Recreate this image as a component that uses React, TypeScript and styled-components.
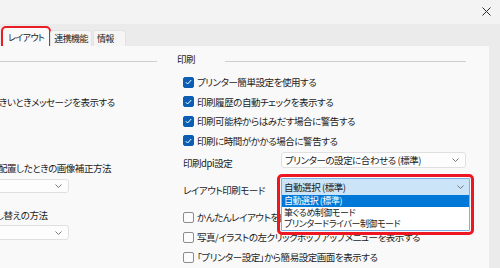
import styled, { createGlobalStyle } from "styled-components";

const GlobalStyle = createGlobalStyle`
  html, body {
    margin: 0;
    padding: 0;
    width: 500px;
    height: 268px;
    overflow: hidden;
    background: #f2f2f2;
  }
  body {
    font-family: "Noto Sans CJK JP", "Noto Sans", sans-serif;
    font-feature-settings: "palt";
    letter-spacing: -0.45px;
    color: #1b1b1b;
  }
`;

const checked = [
    "プリンター簡単設定を使用する",
    "印刷履歴の自動チェックを表示する",
    "印刷可能枠からはみだす場合に警告する",
    "印刷に時間がかかる場合に警告する",
];

const unchecked = [
    "かんたんレイアウトを自動で起動する",
    "写真/イラストの左クリックポップアップメニューを表示する",
    "「プリンター設定」から簡易設定画面を表示する",
];

const modes = ["自動選択 (標準)", "筆ぐるめ制御モード", "プリンタードライバー制御モード"];

function Chevron() {
    return (
        <svg width="7" height="4" viewBox="0 0 7 4">
            <polyline points="0.5,0.5 3.5,3.5 6.5,0.5" fill="none" stroke="#6a6a6a" strokeWidth="0.9"/>
        </svg>
    );
}

function Check() {
    return (
        <svg width="7" height="6" viewBox="0 0 7 6">
            <polyline points="0.8,3.2 2.6,5 6.2,1" fill="none" stroke="#fff" strokeWidth="1"/>
        </svg>
    );
}

export default function App() {
    return (
        <>
            <GlobalStyle/>
            <Window>
                <TitleBar>
                    <CloseButton>
                        <svg width="9" height="9" viewBox="0 0 9 9">
                            <path d="M0.5 0.5L8.5 8.5M8.5 0.5L0.5 8.5" stroke="#2a2a2a" strokeWidth="1"/>
                        </svg>
                    </CloseButton>
                </TitleBar>
                <TabStrip>
                    <Tab $active>レイアウト</Tab>
                    <Tab>連携機能</Tab>
                    <Tab $min={33}>情報</Tab>
                </TabStrip>
                <Body>
                    <Panel>
                        <LeftCol>
                            <Header><Rule/></Header>
                            <Row $mt={4.5}/>
                            <Row><ClipText>きいときメッセージを表示する</ClipText></Row>
                            <Label $mt={48.5} $shift={-2}>配置したときの画像補正方法</Label>
                            <Select $mt={3} $h={14} $left>
                                <span/>
                                <Chevron/>
                            </Select>
                            <Label $mt={14} $shift={-4}>し替えの方法</Label>
                            <Select $mt={2} $h={15} $left>
                                <span/>
                                <Chevron/>
                            </Select>
                        </LeftCol>

                        <RightCol>
                            <Header>
                                <HeaderTitle>印刷</HeaderTitle>
                                <Rule/>
                            </Header>
                            <List $mt={4.5}>
                                {checked.map((t) => (
                                    <Row key={t}>
                                        <Box $on><Check/></Box>
                                        <RowText>{t}</RowText>
                                    </Row>
                                ))}
                            </List>
                            <Field $mt={1.5} $h={16}>
                                <FieldLabel>印刷dpi設定</FieldLabel>
                                <Select $h={16}>
                                    <span>プリンターの設定に合わせる (標準)</span>
                                    <Chevron/>
                                </Select>
                            </Field>
                            <Field $mt={10} $h={17}>
                                <FieldLabel>レイアウト印刷モード</FieldLabel>
                                <SelectSlot>
                                    <OpenSelect>
                                        <OpenHead>
                                            <span>{modes[0]}</span>
                                            <Chevron/>
                                        </OpenHead>
                                        {modes.map((m, i) => (
                                            <Option key={m} $sel={i === 0}>{m}</Option>
                                        ))}
                                    </OpenSelect>
                                </SelectSlot>
                            </Field>
                            <List $mt={12}>
                                {unchecked.map((t) => (
                                    <Row key={t} $h={20}>
                                        <Box/>
                                        <RowText>{t}</RowText>
                                    </Row>
                                ))}
                            </List>
                        </RightCol>
                    </Panel>
                    <Gutter/>
                </Body>
            </Window>
        </>
    );
}

const Window = styled.div`
    width: 500px;
    height: 268px;
    display: flex;
    flex-direction: column;
    overflow: hidden;
`
const TitleBar = styled.div`
    height: 24px;
    background: #f3f3f3;
    display: flex;
    justify-content: flex-end;
    align-items: flex-start;
`
const CloseButton = styled.div`
    width: 9px;
    height: 9px;
    margin: 7px 9px 0 0;
    display: flex;
`
const TabStrip = styled.div`
    height: 22px;
    background: #ebebeb;
    display: flex;
    align-items: flex-end;
    padding-left: 3px;
    font-size: 9px;
    letter-spacing: -0.6px;
`
const Tab = styled.div<{ $active?: boolean; $min?: number }>`
    height: ${(p) => (p.$active ? 18 : 16)}px;
    min-width: ${(p) => p.$min ?? 0}px;
    padding: 0 ${(p) => (p.$active ? 4 : 3)}px;
    margin-right: 1px;
    display: flex;
    align-items: center;
    box-sizing: border-box;
    background: ${(p) => (p.$active ? "#f9f9f9" : "#f5f5f5")};
    border: 1px solid ${(p) => (p.$active ? "#f9f9f9" : "#e2e2e2")};
    border-bottom: none;
    border-radius: 3px 3px 0 0;
    outline: ${(p) => (p.$active ? "2.5px solid #ea1c24" : "none")};
    outline-offset: 0;
`
const Body = styled.div`
    flex: 1;
    display: flex;
`
const Panel = styled.div`
    width: 489px;
    background: #f9f9f9;
    display: flex;
    padding-top: 4px;
    box-sizing: border-box;
`
const Gutter = styled.div`
    flex: 1;
    background: #ebebeb;
`
const LeftCol = styled.div`
    width: 157px;
    overflow: hidden;
    display: flex;
    flex-direction: column;
`
const RightCol = styled.div`
    width: 289px;
    margin-left: 20px;
    display: flex;
    flex-direction: column;
`
const Header = styled.div`
    height: 18px;
    display: flex;
    align-items: center;
    font-size: 9.5px;
`
const HeaderTitle = styled.div`
    width: 48px;
`
const Rule = styled.div`
    flex: 1;
    height: 1px;
    margin-top: 4px;
    background: #cfcfcf;
`
const List = styled.div<{ $mt?: number }>`
    margin-top: ${(p) => p.$mt ?? 0}px;
    display: flex;
    flex-direction: column;
`
const Row = styled.div<{ $mt?: number; $h?: number }>`
    height: ${(p) => p.$h ?? 19.5}px;
    margin-top: ${(p) => p.$mt ?? 0}px;
    display: flex;
    align-items: center;
    padding-left: 6px;
    font-size: 9.5px;
    white-space: nowrap;
`
const ClipText = styled.span`
    margin-left: -7px;
`
const Box = styled.div<{ $on?: boolean }>`
    width: 11px;
    height: 11px;
    box-sizing: border-box;
    border-radius: 2px;
    flex-shrink: 0;
    display: flex;
    align-items: center;
    justify-content: center;
    background: ${(p) => (p.$on ? "#0a5fb4" : "#fbfbfb")};
    border: 1px solid ${(p) => (p.$on ? "#0a5fb4" : "#8c8c8c")};
`
const RowText = styled.span`
    margin-left: 3px;
`
const Label = styled.div<{ $mt?: number; $shift: number }>`
    height: 16px;
    margin-top: ${(p) => p.$mt ?? 0}px;
    margin-left: ${(p) => p.$shift}px;
    display: flex;
    align-items: center;
    font-size: 9.5px;
    white-space: nowrap;
`
const Field = styled.div<{ $mt?: number; $h: number }>`
    height: ${(p) => p.$h}px;
    margin-top: ${(p) => p.$mt ?? 0}px;
    display: flex;
    align-items: center;
    padding-left: 6px;
    font-size: 9.5px;
`
const FieldLabel = styled.div`
    width: 98px;
    flex-shrink: 0;
    padding-top: 6px;
    white-space: nowrap;
`
const Select = styled.div<{ $mt?: number; $h: number; $left?: boolean }>`
    height: ${(p) => p.$h}px;
    width: ${(p) => (p.$left ? 100 : 189)}px;
    margin-top: ${(p) => p.$mt ?? 0}px;
    margin-left: ${(p) => (p.$left ? -31 : 0)}px;
    box-sizing: border-box;
    background: #fdfdfd;
    border: 1px solid #e0e0e0;
    border-radius: 3px;
    display: flex;
    align-items: center;
    justify-content: space-between;
    padding: 0 6px 0 3px;
    font-size: 9.5px;
    white-space: nowrap;
`
const SelectSlot = styled.div`
    position: relative;
    width: 189px;
    height: 17px;
`
const OpenSelect = styled.div`
    position: absolute;
    top: 0;
    left: 0;
    width: 189px;
    box-sizing: border-box;
    border: 1px solid #79b1e6;
    background: #fff;
    outline: 3px solid #ee1620;
    outline-offset: 1.5px;
    border-radius: 1px;
    z-index: 2;
`
const OpenHead = styled.div`
    height: 16px;
    background: #cce4f7;
    display: flex;
    align-items: center;
    justify-content: space-between;
    padding: 0 5px 0 2px;
    font-size: 9.5px;
`
const Option = styled.div<{ $sel?: boolean }>`
    height: 11.5px;
    line-height: 11.5px;
    padding-left: 2px;
    font-size: 9px;
    white-space: nowrap;
    background: ${(p) => (p.$sel ? "#0078d7" : "#fff")};
    color: ${(p) => (p.$sel ? "#fff" : "#1b1b1b")};
`
